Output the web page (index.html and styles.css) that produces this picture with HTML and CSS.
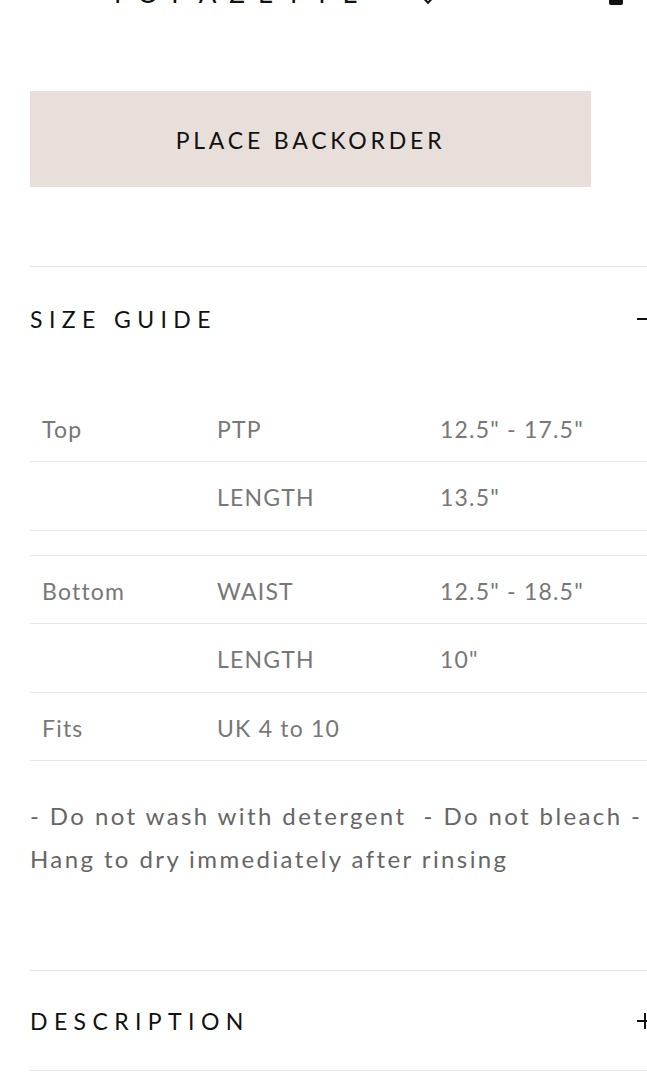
FILE: index.html
```html
<!DOCTYPE html>
<html lang="en">
<head>
    <meta charset="UTF-8">
    <title>Topazette - Product</title>
    <link rel="stylesheet" href="styles.css">
</head>
<body>

<header class="top-strip">
    <span class="brand">TOPAZETTE</span>
    <span class="chevron"></span>
    <span class="bag"></span>
</header>

<div class="page">
    <button class="backorder">PLACE BACKORDER</button>

    <section class="accordion open">
        <div class="acc-head">
            <h3>SIZE GUIDE</h3>
            <span class="toggle minus"></span>
        </div>
        <div class="acc-body">
            <table class="size-table">
                <tr><td>Top</td><td>PTP</td><td>12.5" - 17.5"</td></tr>
                <tr><td></td><td>LENGTH</td><td>13.5"</td></tr>
                <tr class="spacer"><td></td><td></td><td></td></tr>
                <tr><td>Bottom</td><td>WAIST</td><td>12.5" - 18.5"</td></tr>
                <tr><td></td><td>LENGTH</td><td>10"</td></tr>
                <tr><td>Fits</td><td>UK 4 to 10</td><td></td></tr>
            </table>
            <p class="care">- Do not wash with detergent &nbsp;- Do not bleach - Hang to dry immediately after rinsing</p>
        </div>
    </section>

    <section class="accordion">
        <div class="acc-head">
            <h3>DESCRIPTION</h3>
            <span class="toggle plus"></span>
        </div>
    </section>
</div>

</body>
</html>
```

FILE: styles.css
```css
body {
    margin: 0;
    font-family: 'Lato', 'Liberation Sans', sans-serif;
    background: #fff;
    color: #111;
    overflow-x: hidden;
}
.top-strip {
    height: 5px;
    overflow: hidden;
    display: flex;
    align-items: flex-end;
    padding-left: 110px;
}
.brand {
    font-size: 26px;
    letter-spacing: 13px;
    line-height: 26px;
    margin-bottom: -1px;
    color: #111;
}
.chevron {
    margin-left: 52px;
    width: 8px;
    height: 8px;
    margin-bottom: 3px;
    border-right: 2px solid #111;
    border-bottom: 2px solid #111;
    transform: rotate(45deg);
}
.bag {
    width: 14px;
    height: 20px;
    margin-left: 176px;
    background: #111;
    border-radius: 2px;
}
.page {
    margin-left: 30px;
    width: 617px;
}
.backorder {
    display: block;
    margin-top: 86px;
    width: 561px;
    height: 96px;
    padding-top: 3px;
    border: none;
    background: #e8dfdb;
    font-family: 'Lato', 'Liberation Sans', sans-serif;
    font-size: 23px;
    font-weight: 400;
    letter-spacing: 3.8px;
    color: #111;
    cursor: pointer;
}
.accordion {
    border-top: 1px solid #e4e4e4;
}
.accordion:first-of-type {
    margin-top: 79px;
}
.accordion:last-of-type {
    border-bottom: 1px solid #e4e4e4;
}
.acc-head {
    height: 104px;
    display: flex;
    align-items: center;
    justify-content: space-between;
}
.accordion + .accordion .acc-head {
    height: 99px;
}
.acc-head h3 {
    margin: 0;
    font-size: 23px;
    font-weight: 400;
    letter-spacing: 6.4px;
    color: #111;
}
/* icon is cut by the screen edge, only the visible part is drawn */
.toggle {
    position: relative;
    width: 10px;
    height: 16px;
}
.toggle::before {
    content: "";
    position: absolute;
    left: 0;
    top: 7px;
    width: 10px;
    height: 2px;
    background: #111;
}
.plus::after {
    content: "";
    position: absolute;
    left: 7px;
    top: 0;
    width: 2px;
    height: 16px;
    background: #111;
}
.acc-body {
    padding-top: 22px;
    padding-bottom: 90px;
}
.size-table {
    width: 100%;
    border-collapse: collapse;
    font-size: 23px;
    color: #777;
}
.size-table td {
    height: 68.5px;
    padding: 3px 0 0 12px;
    border-bottom: 1px solid #e8e8e8;
    letter-spacing: 1.2px;
    box-sizing: border-box;
}
.size-table td:nth-child(1) {
    width: 175px;
}
.size-table td:nth-child(2) {
    width: 223px;
}
.size-table tr.spacer td {
    height: 25px;
    padding: 0;
}
.care {
    margin: 33px 0 0;
    font-size: 24px;
    line-height: 43px;
    letter-spacing: 2.4px;
    color: #666;
}
```
